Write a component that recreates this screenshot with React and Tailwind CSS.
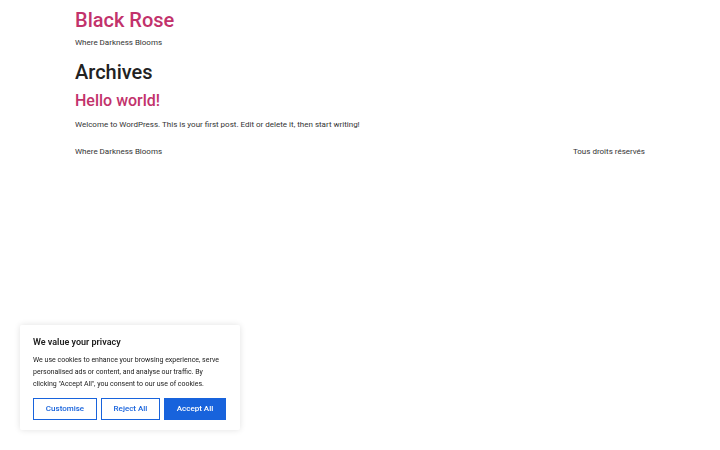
export default function App() {
  return (
    <div className="min-h-[450px] bg-white text-[#333]" style={{ fontFamily: 'Roboto, "Liberation Sans", sans-serif' }}>
      <div className="mx-auto w-[570px]">
        <header className="pt-[6px]">
          <h1 className="text-[20px] leading-[28px] font-medium text-[#c2326b]">Black Rose</h1>
          <p className="mt-[3px] text-[8px] leading-[12px] text-[#333]">Where Darkness Blooms</p>
        </header>
        <main className="mt-[9px]">
          <h2 className="text-[20px] leading-[28px] font-medium text-[#222]">Archives</h2>
          <h3 className="mt-[4px] text-[16px] leading-[22px] font-medium text-[#c2326b]">Hello world!</h3>
          <p className="mt-[7px] text-[8px] leading-[12px]">Welcome to WordPress. This is your first post. Edit or delete it, then start writing!</p>
        </main>
        <footer className="mt-[15px] flex justify-between text-[8px] leading-[12px]">
          <span>Where Darkness Blooms</span>
          <span>Tous droits réservés</span>
        </footer>
      </div>

      <div className="fixed left-[20px] bottom-[20px] w-[220px] rounded-[2px] bg-white px-[13px] pt-[11px] pb-[10px] shadow-[0_0_6px_rgba(0,0,0,0.12)]">
        <p className="text-[9px] leading-[12px] font-semibold text-[#212121]">We value your privacy</p>
        <p className="mt-[6px] text-[7px] leading-[12px] text-[#212121]">
          We use cookies to enhance your browsing experience, serve personalised ads or content, and analyse our traffic. By clicking "Accept All", you consent to our use of cookies.
        </p>
        <div className="mt-[8px] flex gap-[4px]">
          <button className="h-[22px] w-[64px] border-[1.5px] border-[#1863dc] text-[8px] font-medium text-[#1863dc]">Customise</button>
          <button className="h-[22px] w-[59px] border-[1.5px] border-[#1863dc] text-[8px] font-medium text-[#1863dc]">Reject All</button>
          <button className="h-[22px] w-[62px] border-[1.5px] border-[#1863dc] bg-[#1863dc] text-[8px] font-medium text-white">Accept All</button>
        </div>
      </div>
    </div>
  )
}
